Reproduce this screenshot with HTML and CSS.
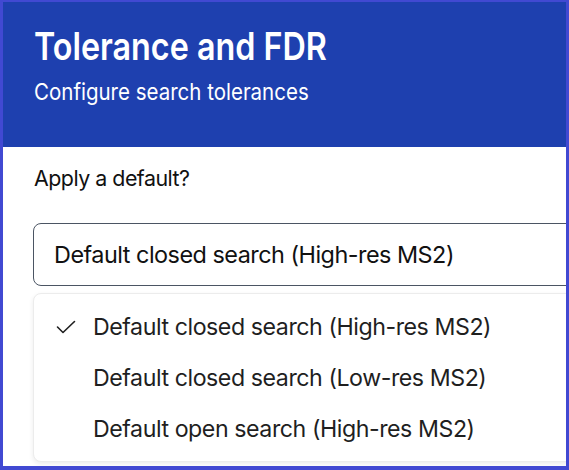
FILE: index.html
```html
<!DOCTYPE html>
<html lang="en">
<head>
<meta charset="utf-8">
<title>Tolerance and FDR</title>
<link rel="stylesheet" href="styles.css">
</head>
<body>
<div class="frame">
  <header class="header">
    <h1 class="title">Tolerance and FDR</h1>
    <p class="subtitle">Configure search tolerances</p>
  </header>
  <section class="content">
    <div class="label">Apply a default?</div>
    <div class="select">Default closed search (High-res MS2)</div>
    <ul class="menu">
      <li class="option selected">
        <svg class="check" viewBox="0 0 22 14" width="22" height="14" aria-hidden="true"><path d="M2.5 7l5.5 5.5L19.5 1.5" fill="none" stroke="currentColor" stroke-width="1.6" stroke-linecap="round" stroke-linejoin="round"/></svg>
        <span>Default closed search (High-res MS2)</span>
      </li>
      <li class="option"><span class="spacer"></span><span>Default closed search (Low-res MS2)</span></li>
      <li class="option"><span class="spacer"></span><span>Default open search (High-res MS2)</span></li>
    </ul>
  </section>
</div>
</body>
</html>
```

FILE: styles.css
```css
* { box-sizing: border-box; }
html, body { margin: 0; padding: 0; background: #ffffff; }
body { font-family: Inter, "Noto Sans", "Liberation Sans", sans-serif; }

.frame {
  width: 569px;
  height: 470px;
  border: 3px solid #4149d2;
  border-top-width: 2px;
  border-bottom-width: 4px;
  overflow: hidden;
  background: #ffffff;
}

.header {
  background: #1e40af;
  color: #ffffff;
  height: 145px;
  padding: 22px 0 0 31px;
}
.title {
  margin: 0;
  font-size: 32.3px;
  line-height: 38px;
  font-weight: 600;
  transform: scaleY(1.2);
  transform-origin: left top;
}
.subtitle {
  margin: 14px 0 0;
  font-size: 20.5px;
  line-height: 28px;
  font-weight: 400;
  transform: scaleY(1.12);
  transform-origin: left top;
}

.content {
  padding: 17px 0 0 30px;
}
.label {
  font-size: 21.4px;
  letter-spacing: -0.5px;
  line-height: 28px;
  color: #111111;
  padding-left: 1px;
}
.select {
  margin-top: 31px;
  width: 620px;
  height: 63px;
  border: 1px solid #4b5563;
  border-radius: 8px;
  padding: 0 0 0 20px;
  display: flex;
  align-items: center;
  font-size: 23.4px;
  letter-spacing: -0.5px;
  color: #111111;
}
.menu {
  list-style: none;
  margin: 7px 0 0;
  padding: 7px 0;
  width: 620px;
  border: 1px solid #ececec;
  border-radius: 8px;
  box-shadow: 0 2px 5px rgba(0, 0, 0, 0.08);
  background: #ffffff;
}
.option {
  display: flex;
  align-items: center;
  height: 51px;
  padding-left: 21px;
  font-size: 23.2px;
  letter-spacing: -0.45px;
  color: #1f1f1f;
}
.check, .spacer {
  width: 22px;
  flex: none;
  margin-right: 16px;
  color: #1f1f1f;
}
.check { height: 14px; margin-top: 1px; }
.spacer { height: 22px; }
```
